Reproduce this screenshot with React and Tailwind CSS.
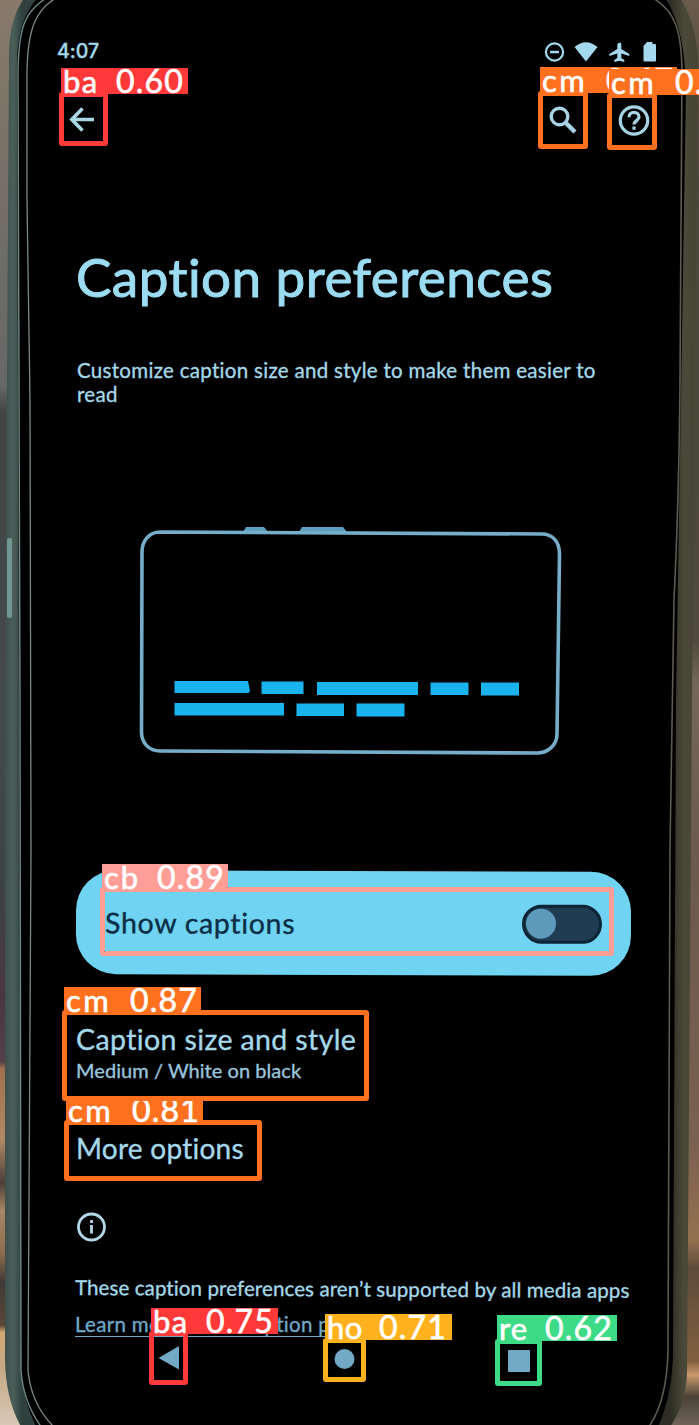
import React from "react";

function Backdrop() {
  return (
    <svg className="absolute inset-0 -z-10" width="699" height="1425" viewBox="0 0 699 1425" aria-hidden="true">
      <defs>
        <linearGradient id="wallL" x1="0" y1="0" x2="0" y2="1">
          <stop offset="0" stopColor="#887a6b" />
          <stop offset="0.14" stopColor="#746f66" />
          <stop offset="0.2" stopColor="#6b6b67" />
          <stop offset="0.27" stopColor="#676967" />
          <stop offset="0.29" stopColor="#414443" />
          <stop offset="0.5" stopColor="#474a4b" />
          <stop offset="0.62" stopColor="#3d4246" />
          <stop offset="0.7" stopColor="#4a3642" />
          <stop offset="0.745" stopColor="#54404a" />
          <stop offset="0.75" stopColor="#a0704c" />
          <stop offset="0.8" stopColor="#b18866" />
          <stop offset="0.83" stopColor="#4c4039" />
          <stop offset="0.85" stopColor="#a98662" />
          <stop offset="0.88" stopColor="#8d6b4e" />
          <stop offset="0.9" stopColor="#3f3a35" />
          <stop offset="0.93" stopColor="#5b4736" />
          <stop offset="0.935" stopColor="#d3a873" />
          <stop offset="0.96" stopColor="#c5a985" />
          <stop offset="1" stopColor="#d8c8b6" />
        </linearGradient>
        <linearGradient id="wallR" x1="0" y1="0" x2="0" y2="1">
          <stop offset="0" stopColor="#6b5b4b" />
          <stop offset="0.08" stopColor="#4d4a3c" />
          <stop offset="0.3" stopColor="#49483a" />
          <stop offset="0.45" stopColor="#504b3e" />
          <stop offset="0.48" stopColor="#74675a" />
          <stop offset="0.6" stopColor="#6b5a4d" />
          <stop offset="0.8" stopColor="#7a604f" />
          <stop offset="0.87" stopColor="#94714f" />
          <stop offset="0.89" stopColor="#5e4b3a" />
          <stop offset="0.955" stopColor="#80603f" />
          <stop offset="0.965" stopColor="#c99a6c" />
          <stop offset="0.98" stopColor="#4c4238" />
          <stop offset="1" stopColor="#6f6358" />
        </linearGradient>
        <linearGradient id="rim" x1="0" y1="0" x2="1" y2="0">
          <stop offset="0" stopColor="#3f504c" />
          <stop offset="0.012" stopColor="#4b5f5a" />
          <stop offset="0.025" stopColor="#2f403d" />
          <stop offset="0.5" stopColor="#242a27" />
          <stop offset="0.96" stopColor="#2e2d23" />
          <stop offset="0.98" stopColor="#4b4a3a" />
          <stop offset="1" stopColor="#444334" />
        </linearGradient>
      </defs>
      <rect width="350" height="1425" fill="url(#wallL)" />
      <rect x="350" width="349" height="1425" fill="url(#wallR)" />
      <path d="M44 -20 C16 -2 9 24 9 60 L5 700 L5 1360 Q6 1410 30 1440 L660 1440 Q687 1410 687 1370 L692 700 L698 60 Q696 14 668 -20Z" fill="url(#rim)" />
      <path d="M52 -14 C28 2 17 24 17 70 L19 700 L21 1370 Q24 1410 44 1440 L652 1440 Q673 1400 673 1350 L676 700 L686 90 Q685 14 655 -14Z" fill="#000000" />
      <path d="M50 -4 C24 10 19 28 18 70 L20 700 L21 1370 Q23 1402 42 1428" fill="none" stroke="#6d8986" strokeWidth="1.4" />
      <path d="M58 -3 C35 9 28 30 27 70 L27 200 L30 400 L31 850 L28 1370 Q31 1405 55 1428" fill="none" stroke="#7b8984" strokeWidth="1.3" />
      <path d="M651 -3 C675 10 682 30 682 75 L680 380 Q679 500 674 600 L670 850 L668 1350 Q667 1402 648 1428" fill="none" stroke="#5c5b50" strokeWidth="1.6" />
      <rect x="7" y="538" width="5" height="80" rx="2" fill="#6e9692" />
    </svg>
  );
}

function Detection({ box, tag, name, score, gap }) {
  return (
    <>
      <div className={"absolute rounded-[3px] border-[5px] " + box} />
      <div className={"absolute flex h-[26px] items-center whitespace-nowrap pl-[2px] font-['Lato'] text-[31px] leading-[26px] text-white [-webkit-text-stroke:0.6px_#fff] " + tag}>
        <span className={"shrink-0 " + gap}>{name}</span>
        <span className="text-[32px] tracking-[1.2px]">{score}</span>
      </div>
    </>
  );
}

function StatusBar() {
  return (
    <div className="flex h-[26px] items-center justify-between pl-[57px] pr-[43px]">
      <span className="pt-[2px] font-['Inter'] text-[19.5px] font-medium">4:07</span>
      <svg width="113" height="24" viewBox="543 39 113 24" fill="#a4d8ee" aria-hidden="true">
        <circle cx="554.5" cy="52" r="8.6" fill="none" stroke="#a4d8ee" strokeWidth="2.2" />
        <path d="M550 50.800h9v2.500h-9z" />
        <path d="M574.5 47 Q586 37.500 597.500 47 L586 61.500Z" />
        <path d="M619 43 q2 -1.500 2.300 1.500 V49 l8 5 v2 l-8 -2.400 v4.400 l3 2 v2 l-5 -1.300 -5 1.300 v-2 l3 -2 v-4.400 l-8 2.400 v-2 l8 -5 V44.500 q0 -1.500 1.700 -1.500Z" />
        <path d="M647 42h5.500v2h2.500q1 0 1 1v15.500q0 1 -1 1h-10.500q-1 0 -1 -1V46Z" />
      </svg>
    </div>
  );
}

function Toolbar() {
  return (
    <div className="flex h-[44px] items-center justify-between pl-[68px] pr-[49px]">
      <svg width="28" height="28" viewBox="0 0 28 28" fill="none" stroke="#a9d7e5" strokeWidth="3.600" aria-hidden="true">
        <path d="M26 13.500H4M14.500 2.500L3.800 13.500l10.700 11" />
      </svg>
      <div className="flex items-center gap-[40px]">
        <svg width="30" height="30" viewBox="0 0 30 30" fill="none" stroke="#a7d3e4" aria-hidden="true">
          <circle cx="11.500" cy="11.500" r="8.300" strokeWidth="3.400" />
          <path d="M17.500 17.500L27 27" strokeWidth="4.500" />
        </svg>
        <svg width="32" height="32" viewBox="0 0 32 32" fill="none" stroke="#a7d3e4" strokeWidth="3.200" aria-hidden="true">
          <circle cx="16" cy="16.500" r="13.700" />
          <path d="M11 13.200c0-6.600 10-6.400 10-.2c0 3.500-5 3.800-5 7.500M16 22.500v3.200" />
        </svg>
      </div>
    </div>
  );
}

function CaptionIllustration() {
  return (
    <div className="flex h-[420px] w-[572px] justify-center rounded-[32px] bg-black">
      <svg width="572" height="420" viewBox="64 428 572 420" aria-hidden="true">
        <path d="M243 532l3-5h18l4 5zM299 532l3-5h41l4 5z" fill="#5d9fc0" />
        <path d="M160 532L542 534C552 534 559.500 541 559.500 554L557 734C557 745 548 753 537 753L160 751C149 751 141.500 743 141.500 732L142 552C142 541 149 532 160 532Z" fill="none" stroke="#76adc8" strokeWidth="3.600" />
        <g fill="#19b3ed">
          <path d="M174.500 681H248l2 10l-1.500 2H174.500zM261.500 681.500H303.500V694H261.500zM317 682H418V695H317zM430.500 682.500H468.500V695H430.500zM481 682.500H519V695.500H481z" />
          <path d="M174.500 703H284V715.500H174.500zM296.500 703.500H344V716H296.500zM356.500 703.500H404.500V716.500H356.500z" />
        </g>
      </svg>
    </div>
  );
}

export default function App() {
  return (
    <div className="relative isolate h-[1425px] w-[699px] overflow-hidden font-['Lato'] text-[#a4d8ea] [font-variant-ligatures:none]">
      <Backdrop />
      <main className="flex flex-col [-webkit-text-stroke:0.35px_currentColor]">
        <header className="pt-[38px]">
          <StatusBar />
          <div className="h-[34px]" />
          <Toolbar />
        </header>
        <h1 className="mt-[105px] h-[60px] whitespace-nowrap pl-[76px] text-[53px] leading-[60px] tracking-[0.45px] text-[#9bdcf2] [-webkit-text-stroke:1px_currentColor]">Caption preferences</h1>
        <p className="mt-[51px] h-[48px] whitespace-nowrap pl-[77px] text-[20.5px] leading-[24px] tracking-[0.3px]">
          Customize caption size and style to make them easier to<br />read
        </p>
        <div className="mt-[22px] pl-[64px]">
          <CaptionIllustration />
        </div>
        <section className="ml-[76px] mt-[23px] flex h-[104px] w-[555px] rotate-[0.2deg] items-center justify-between rounded-[40px] bg-[#6fd3f1] pl-[29px] pr-[29px] text-[#0a2d45]">
          <span className="whitespace-nowrap text-[28.5px] tracking-[0.7px]">Show captions</span>
          <span className="flex h-[39px] w-[80px] items-center rounded-full border-[3px] border-[#0b2537] bg-[#203c53] pl-[1px]">
            <span className="h-[30px] w-[30px] rounded-full bg-[#5e9abb]" />
          </span>
        </section>
        <section className="mt-[46px] h-[66px] whitespace-nowrap pl-[76px]">
          <h2 className="h-[36px] text-[28.5px] leading-[36px] tracking-[0.38px]">Caption size and style</h2>
          <p className="h-[24px] pt-px text-[20px] leading-[24px] tracking-[0.05px] text-[#9ac5dd]">Medium / White on black</p>
        </section>
        <h2 className="mt-[43px] h-[36px] pl-[76px] text-[28px] leading-[36px] tracking-[0.25px]">More options</h2>
        <svg className="ml-[76px] mt-[45px]" width="31" height="31" viewBox="0 0 31 31" fill="none" stroke="#b4d8e8" strokeWidth="2.800" aria-hidden="true">
          <circle cx="15.500" cy="16" r="13" />
          <path d="M15.500 14v8.500M15.500 9v3" />
        </svg>
        <p className="mt-[33px] h-[24px] whitespace-nowrap pl-[75px] text-[20.5px] leading-[24px] tracking-[0.1px]">
          <span className="inline-block origin-left rotate-[0.3deg]">These caption preferences aren&rsquo;t supported by all media apps</span>
        </p>
        <p className="mt-[13px] h-[24px] whitespace-nowrap pl-[75px] text-[20.5px] leading-[24px] tracking-[0.3px] text-[#6fa8c8]">
          <span className="underline decoration-1 underline-offset-4">Learn more about caption prefe</span>
        </p>
        <nav className="mt-[7px] flex h-[32px] items-center pl-[158px]">
          <svg width="372" height="28" viewBox="158 1346 372 28" fill="#72a9c5" aria-hidden="true">
            <path d="M158.500 1359L179 1347V1370.500Z" />
            <circle cx="344.500" cy="1360" r="10" />
            <rect x="508" y="1351" width="22" height="22" rx="1" />
          </svg>
        </nav>
      </main>

      <Detection box="left-[59px] top-[92px] h-[54px] w-[49px] border-[#ff3838]" tag="left-[61px] top-[68px] w-[127px] bg-[#ff3838]" name="ba" gap="w-[53px] tracking-[1.5px]" score="0.60" />
      <Detection box="left-[538px] top-[91px] h-[58px] w-[50px] border-[#ff701f]" tag="left-[540px] top-[67px] w-[137px] bg-[#ff701f]" name="cm" gap="w-[64px] tracking-[2.5px]" score="0.67" />
      <Detection box="left-[607px] top-[93px] h-[57px] w-[50px] border-[#ff701f]" tag="left-[609px] top-[69px] w-[137px] bg-[#ff701f]" name="cm" gap="w-[64px] tracking-[2.5px]" score="0.67" />
      <Detection box="left-[100px] top-[887px] h-[69px] w-[514px] border-[#ff9d97]" tag="left-[102px] top-[864px] w-[126px] bg-[#ff9d97]" name="cb" gap="w-[53px] tracking-[2px]" score="0.89" />
      <Detection box="left-[64px] top-[1120px] h-[61px] w-[198px] border-[#ff701f]" tag="left-[66px] top-[1097px] w-[137px] bg-[#ff701f]" name="cm" gap="w-[64px] tracking-[2.5px]" score="0.81" />
      <Detection box="left-[62px] top-[1010px] h-[91px] w-[307px] border-[#ff701f]" tag="left-[64px] top-[987px] w-[137px] bg-[#ff701f]" name="cm" gap="w-[64px] tracking-[2.5px]" score="0.87" />
      <Detection box="left-[149px] top-[1331px] h-[54px] w-[39px] border-[#ff3838]" tag="left-[151px] top-[1308px] w-[127px] bg-[#ff3838]" name="ba" gap="w-[53px] tracking-[1.5px]" score="0.75" />
      <Detection box="left-[323px] top-[1338px] h-[44px] w-[43px] border-[#ffb21d]" tag="left-[325px] top-[1314px] w-[127px] bg-[#ffb21d]" name="ho" gap="w-[52px] tracking-[0.5px]" score="0.71" />
      <Detection box="left-[495px] top-[1339px] h-[47px] w-[47px] border-[#3ddb86]" tag="left-[497px] top-[1315px] w-[120px] bg-[#3ddb86]" name="re" gap="w-[46px] tracking-[1px]" score="0.62" />
    </div>
  );
}
